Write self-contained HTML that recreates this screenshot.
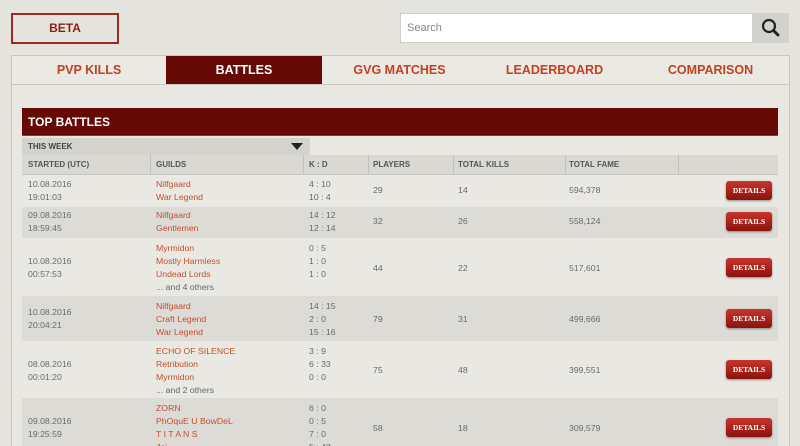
<!DOCTYPE html>
<html><head><meta charset="utf-8"><style>
*{margin:0;padding:0;box-sizing:border-box}
html,body{width:800px;height:446px;overflow:hidden}
body{background:#e4e3de;font-family:"Liberation Sans",sans-serif;position:relative}
.a{position:absolute}
.beta{left:11px;top:13px;width:108px;height:31px;border:2px solid #9b2a22;color:#8d1f12;font-weight:bold;font-size:12px;text-align:center;line-height:27px}
.search{left:400px;top:13px;width:353px;height:30px;background:#fff;border:1px solid #d0cfca;color:#888;font-size:11px;padding-left:6px;line-height:29px}
.sbtn{left:753px;top:13px;width:36px;height:30px;background:#d2d1cc}
.panel{left:11px;top:55px;width:779px;height:400px;border:1px solid #c8c7c2;background:#e8e7e2}
.tabs{left:11px;top:55px;width:779px;height:30px;border:1px solid #c8c7c2;background:#eae9e4}
.tab{top:56px;height:28px;font-weight:bold;font-size:12.5px;color:#c3411e;text-align:center;line-height:28px}
.hdr{left:22px;top:108px;width:756px;height:28px;background:#650a05;color:#fff;font-weight:bold;font-size:12px;line-height:28px;padding-left:6px;border-bottom:1px solid #8a3a30}
.week{left:22px;top:138px;width:288px;height:17px;background:#d3d2cd;font-size:8px;font-weight:bold;color:#444;line-height:17px;padding-left:6px}
.ch{left:22px;top:155px;width:756px;height:20px;background:#d9d8d3;border-bottom:1px solid #c8c7c2}
.ch span{position:absolute;top:0;line-height:19px;font-size:8px;font-weight:bold;color:#555}
.sep{position:absolute;top:0;width:1px;height:20px;background:#c2c1bc}
.row{left:22px;width:756px}
.t{position:absolute;font-size:8.7px;color:#6a6a6a;line-height:13px;white-space:nowrap}
.g{color:#c54e2e}
.btn{position:absolute;left:726px;width:46px;height:19px;border-radius:3px;background:linear-gradient(#c8352c,#8a130e);color:#fff;font-family:"Liberation Serif",serif;font-weight:bold;font-size:7.5px;text-align:center;line-height:19px;box-shadow:0 1px 2px rgba(0,0,0,.4)}
</style></head><body>
<div class="a beta">BETA</div>
<div class="a search">Search</div>
<div class="a sbtn"><svg width="36" height="30"><circle cx="16" cy="13" r="6" fill="none" stroke="#222" stroke-width="2.2"/><line x1="20.5" y1="17.5" x2="25" y2="22" stroke="#222" stroke-width="3" stroke-linecap="round"/></svg></div>
<div class="a panel"></div>
<div class="a tabs"></div>
<div class="a tab" style="left:12px;width:154px">PVP KILLS</div>
<div class="a tab" style="left:166px;width:156px;background:#650a05;color:#fff">BATTLES</div>
<div class="a tab" style="left:322px;width:155px">GVG MATCHES</div>
<div class="a tab" style="left:477px;width:155px">LEADERBOARD</div>
<div class="a tab" style="left:632px;width:157px">COMPARISON</div>
<div class="a hdr">TOP BATTLES</div>
<div class="a week">THIS WEEK<svg class="a" style="left:269px;top:5px" width="12" height="7"><path d="M0 0H12L6 7Z" fill="#222"/></svg></div>
<div class="a ch">
<span style="left:6px">STARTED (UTC)</span><div class="sep" style="left:128px"></div>
<span style="left:134px">GUILDS</span><div class="sep" style="left:281px"></div>
<span style="left:287px">K : D</span><div class="sep" style="left:346px"></div>
<span style="left:351px">PLAYERS</span><div class="sep" style="left:431px"></div>
<span style="left:436px">TOTAL KILLS</span><div class="sep" style="left:543px"></div>
<span style="left:547px">TOTAL FAME</span><div class="sep" style="left:656px"></div>
</div>
<div class="a row" style="top:175px;height:32px;background:#e9e8e3"></div>
<div class="a row" style="top:207px;height:31px;background:#dcdbd6"></div>
<div class="a row" style="top:238px;height:58px;background:#e9e8e3"></div>
<div class="a row" style="top:296px;height:45px;background:#dcdbd6"></div>
<div class="a row" style="top:341px;height:57px;background:#e9e8e3"></div>
<div class="a row" style="top:398px;height:48px;background:#dcdbd6"></div>

<div class="t" style="left:28px;top:178px">10.08.2016<br>19:01:03</div>
<div class="t g" style="left:156px;top:178px">Nilfgaard<br>War Legend</div>
<div class="t" style="left:309px;top:178px">4 : 10<br>10 : 4</div>
<div class="t" style="left:373px;top:184px">29</div><div class="t" style="left:458px;top:184px">14</div><div class="t" style="left:569px;top:184px">594,378</div>
<div class="btn" style="top:181px">DETAILS</div>

<div class="t" style="left:28px;top:209px">09.08.2016<br>18:59:45</div>
<div class="t g" style="left:156px;top:209px">Nilfgaard<br>Gentlemen</div>
<div class="t" style="left:309px;top:209px">14 : 12<br>12 : 14</div>
<div class="t" style="left:373px;top:215px">32</div><div class="t" style="left:458px;top:215px">26</div><div class="t" style="left:569px;top:215px">558,124</div>
<div class="btn" style="top:212px">DETAILS</div>

<div class="t" style="left:28px;top:255px">10.08.2016<br>00:57:53</div>
<div class="t g" style="left:156px;top:242px">Myrmidon<br>Mostly Harmless<br>Undead Lords<br><span style="color:#666">... and 4 others</span></div>
<div class="t" style="left:309px;top:242px">0 : 5<br>1 : 0<br>1 : 0</div>
<div class="t" style="left:373px;top:262px">44</div><div class="t" style="left:458px;top:262px">22</div><div class="t" style="left:569px;top:262px">517,601</div>
<div class="btn" style="top:258px">DETAILS</div>

<div class="t" style="left:28px;top:306px">10.08.2016<br>20:04:21</div>
<div class="t g" style="left:156px;top:300px">Nilfgaard<br>Craft Legend<br>War Legend</div>
<div class="t" style="left:309px;top:300px">14 : 15<br>2 : 0<br>15 : 16</div>
<div class="t" style="left:373px;top:313px">79</div><div class="t" style="left:458px;top:313px">31</div><div class="t" style="left:569px;top:313px">499,666</div>
<div class="btn" style="top:309px">DETAILS</div>

<div class="t" style="left:28px;top:358px">08.08.2016<br>00:01:20</div>
<div class="t g" style="left:156px;top:345px">ECHO OF SILENCE<br>Retribution<br>Myrmidon<br><span style="color:#666">... and 2 others</span></div>
<div class="t" style="left:309px;top:345px">3 : 9<br>6 : 33<br>0 : 0</div>
<div class="t" style="left:373px;top:364px">75</div><div class="t" style="left:458px;top:364px">48</div><div class="t" style="left:569px;top:364px">399,551</div>
<div class="btn" style="top:360px">DETAILS</div>

<div class="t" style="left:28px;top:415px">09.08.2016<br>19:25:59</div>
<div class="t g" style="left:156px;top:402px">ZORN<br>PhOquE U BowDeL<br>T I T A N S<br>Joi</div>
<div class="t" style="left:309px;top:402px">6 : 0<br>0 : 5<br>7 : 0<br>5 : 42</div>
<div class="t" style="left:373px;top:422px">58</div><div class="t" style="left:458px;top:422px">18</div><div class="t" style="left:569px;top:422px">309,579</div>
<div class="btn" style="top:418px">DETAILS</div>
</body></html>
